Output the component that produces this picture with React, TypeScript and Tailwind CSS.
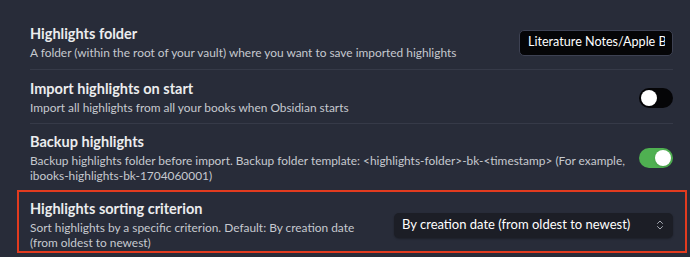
import { ChevronsUpDown } from "lucide-react"

function Toggle({ on }: { on: boolean }) {
  return (
    <div className={`flex h-[20px] w-[34px] shrink-0 items-center rounded-full px-[2px] ${on ? "justify-end bg-[#4fb051]" : "justify-start bg-[#050507]"}`}>
      <div className="h-[16px] w-[16px] rounded-full bg-white shadow-sm" />
    </div>
  )
}

function Info({ title, desc, descClass = "" }: { title: string; desc: string; descClass?: string }) {
  return (
    <div className="min-w-0 flex-1">
      <div className="text-[14.5px] font-bold leading-[18px] text-[#ececee]">{title}</div>
      <div className={`mt-[2px] text-[11.9px] leading-[15px] text-[#c6c9cf] ${descClass}`}>{desc}</div>
    </div>
  )
}

export default function App() {
  return (
    <div className="h-[257px] w-[690px] overflow-hidden bg-[#282c39] pl-[30px] pr-[17px] pt-[16px] font-['Lato',sans-serif]">
      <div className="flex items-center gap-[6px] border-b border-[#363a48] pb-[9px] pt-[9px]">
        <Info
          title="Highlights folder"
          desc="A folder (within the root of your vault) where you want to save imported highlights"
        />
        <div className="flex h-[26px] w-[154px] shrink-0 items-center rounded-[5px] border border-[#3d4152] bg-[#050507] pl-[8px] pr-[7px] text-[12.6px] text-white">
          <div className="min-w-0 flex-1 overflow-hidden whitespace-nowrap">Literature Notes/Apple Books</div>
        </div>
      </div>

      <div className="flex items-center gap-[6px] border-b border-[#363a48] pb-[8px] pt-[10px]">
        <Info title="Import highlights on start" desc="Import all highlights from all your books when Obsidian starts" />
        <Toggle on={false} />
      </div>

      <div className="flex items-center gap-[6px] pb-[7px] pt-[9px]">
        <Info
          title="Backup highlights"
          desc="Backup highlights folder before import. Backup folder template: <highlights-folder>-bk-<timestamp> (For example, ibooks-highlights-bk-1704060001)"
        />
        <Toggle on={true} />
      </div>

      <div className="-ml-[13px] -mr-[14px] flex items-center gap-[6px] border-2 border-[#e23b1f] pb-[1px] pl-[11px] pr-[12px] pt-[8px]">
        <Info
          title="Highlights sorting criterion"
          desc="Sort highlights by a specific criterion. Default: By creation date (from oldest to newest)"
          descClass="max-w-[345px]"
        />
        <div className="flex h-[25px] w-[279px] shrink-0 items-center justify-between rounded-[5px] bg-[#1c1e26] pl-[8px] pr-[7px] text-[13px] text-white shadow-[0_1px_2px_rgba(0,0,0,0.3)]">
          <span className="whitespace-nowrap">By creation date (from oldest to newest)</span>
          <ChevronsUpDown className="h-[12px] w-[12px] text-[#a3a7b0]" strokeWidth={2} />
        </div>
      </div>
    </div>
  )
}
